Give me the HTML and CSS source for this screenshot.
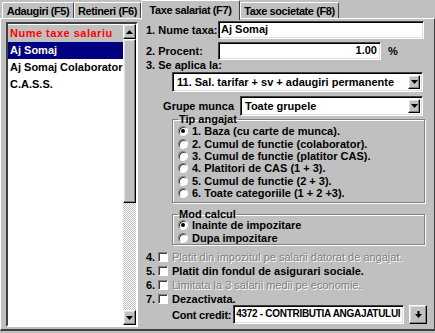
FILE: index.html
```html
<!DOCTYPE html>
<html lang="ro">
<head>
    <meta charset="UTF-8">
    <title>Taxe salariat</title>
    <link rel="stylesheet" href="styles.css">
</head>
<body>
    <div class="window">
        <div class="tabs">
            <div class="tab tab-1">Adaugiri (F5)</div>
            <div class="tab tab-2">Retineri (F6)</div>
            <div class="tab tab-3 active">Taxe salariat (F7)</div>
            <div class="tab tab-4">Taxe societate (F8)</div>
        </div>

        <div class="panel">
            <!-- list of taxes -->
            <div class="list">
                <div class="list-body">
                    <div class="list-head">Nume taxe salariu</div>
                    <div class="list-row selected">Aj Somaj</div>
                    <div class="list-row">Aj Somaj Colaborator</div>
                    <div class="list-row">C.A.S.S.</div>
                </div>
                <div class="scrollbar">
                    <div class="btn3d sb-btn">
                        <svg width="7" height="4" viewBox="0 0 7 4"><path d="M3.5 0 L7 4 L0 4 Z" fill="#000"/></svg>
                    </div>
                    <div class="btn3d sb-thumb"></div>
                    <div class="sb-track"></div>
                    <div class="btn3d sb-btn">
                        <svg width="7" height="4" viewBox="0 0 7 4"><path d="M0 0 L7 0 L3.5 4 Z" fill="#000"/></svg>
                    </div>
                </div>
            </div>

            <!-- edit form -->
            <div class="form">
                <div class="row row-name">
                    <span class="label">1. Nume taxa:</span>
                    <div class="field field-name">Aj Somaj</div>
                </div>
                <div class="row row-pct">
                    <span class="label">2. Procent:</span>
                    <div class="field field-pct">1.00</div>
                    <span class="pct">%</span>
                </div>
                <div class="label label-apply">3. Se aplica la:</div>
                <div class="combo combo-apply">
                    <div class="combo-text">11. Sal. tarifar + sv + adaugiri permanente</div>
                    <div class="btn3d combo-btn">
                        <svg width="7" height="4" viewBox="0 0 7 4"><path d="M0 0 L7 0 L3.5 4 Z" fill="#000"/></svg>
                    </div>
                </div>
                <div class="row row-group">
                    <span class="label label-group">Grupe munca</span>
                    <div class="combo combo-group">
                        <div class="combo-text">Toate grupele</div>
                        <div class="btn3d combo-btn">
                            <svg width="7" height="4" viewBox="0 0 7 4"><path d="M0 0 L7 0 L3.5 4 Z" fill="#000"/></svg>
                        </div>
                    </div>
                </div>

                <fieldset class="groupbox box-tip">
                    <legend>Tip angajat</legend>
                    <div class="opt"><span class="radio checked"></span>1. Baza (cu carte de munca).</div>
                    <div class="opt"><span class="radio"></span>2. Cumul de functie (colaborator).</div>
                    <div class="opt"><span class="radio"></span>3. Cumul de functie (platitor CAS).</div>
                    <div class="opt"><span class="radio"></span>4. Platitori de CAS (1 + 3).</div>
                    <div class="opt"><span class="radio"></span>5. Cumul de functie (2 + 3).</div>
                    <div class="opt"><span class="radio"></span>6. Toate categoriile (1 + 2 +3).</div>
                </fieldset>

                <fieldset class="groupbox box-mod">
                    <legend>Mod calcul</legend>
                    <div class="opt"><span class="radio checked"></span>Inainte de impozitare</div>
                    <div class="opt"><span class="radio"></span>Dupa impozitare</div>
                </fieldset>

                <div class="checks">
                    <div class="check-row"><span class="num">4.</span><span class="check"></span><span class="disabled">Platit din impozitul pe salarii datorat de angajat.</span></div>
                    <div class="check-row"><span class="num">5.</span><span class="check"></span>Platit din fondul de asigurari sociale.</div>
                    <div class="check-row"><span class="num">6.</span><span class="check"></span><span class="disabled">Limitata la 3 salarii medii pe economie.</span></div>
                    <div class="check-row"><span class="num">7.</span><span class="check"></span>Dezactivata.</div>
                </div>

                <div class="row row-cont">
                    <span class="label label-cont">Cont credit:</span>
                    <div class="field field-cont">4372 - CONTRIBUTIA ANGAJATULUI</div>
                    <div class="btn3d cont-btn">
                        <svg width="7" height="7" viewBox="0 0 7 7"><rect x="2.5" y="0" width="2" height="3" fill="#000"/><path d="M0 3 L7 3 L3.5 7 Z" fill="#000"/></svg>
                    </div>
                </div>
            </div>
        </div>
    </div>
</body>
</html>
```

FILE: styles.css
```css
* {
    box-sizing: border-box;
}

body {
    margin: 0;
    background: #c0c0c0;
    font-family: "Liberation Sans", Arial, sans-serif;
    font-size: 11px;
    font-weight: bold;
    color: #000;
}

.window {
    width: 435px;
    height: 333px;
    background: #c0c0c0;
}

/* tabs */
.tabs {
    display: flex;
    height: 18px;
    padding-left: 2px;
    align-items: flex-end;
}

.tab {
    height: 16px;
    padding-top: 2px;
    line-height: 12px;
    text-align: center;
    letter-spacing: -0.4px;
    border-top: 1px solid #fff;
    border-left: 1px solid #fff;
    border-right: 1px solid #404040;
    border-radius: 2px 2px 0 0;
    white-space: nowrap;
}

.tab-1 { width: 72px; }
.tab-2 { width: 67px; }
.tab-3 { width: 99px; }
.tab-4 { width: 99px; }

.tab.active {
    height: 20px;
    margin-bottom: -2px;
    padding-top: 3px;
    background: #c0c0c0;
    position: relative;
    z-index: 1;
}

/* panel */
.panel {
    display: flex;
    height: 313px;
    padding: 3px 0 0 5px;
    border-top: 1px solid #fff;
    border-left: 1px solid #fff;
    border-right: 1px solid #404040;
    border-bottom: 2px solid #404040;
}

/* list */
.list {
    display: flex;
    width: 132px;
    height: 305px;
    border: 2px solid;
    border-color: #404040 #fff #fff #404040;
    box-shadow: inset 1px 1px #000;
}

.list-body {
    flex: 1;
    background: #fff;
    padding-top: 1px;
}

.list-head {
    height: 17px;
    padding-left: 2px;
    line-height: 16px;
    background: #c0c0c0;
    color: #f00;
    letter-spacing: 0.5px;
}

.list-row {
    height: 17px;
    padding-left: 2px;
    line-height: 16px;
    white-space: nowrap;
}

.list-row.selected {
    background: #000080;
    color: #fff;
}

.btn3d {
    background: #c0c0c0;
    border: 1px solid;
    border-color: #fff #000 #000 #fff;
    box-shadow: inset -1px -1px #808080, inset 1px 1px #dfdfdf;
    display: flex;
    align-items: center;
    justify-content: center;
}

.scrollbar {
    width: 13px;
    display: flex;
    flex-direction: column;
    background: #dfdfdf;
}

.sb-btn {
    height: 15px;
}

.sb-thumb {
    height: 164px;
}

.sb-track {
    flex: 1;
    background: repeating-conic-gradient(#fff 0 25%, #c0c0c0 0 50%) 0 0 / 2px 2px;
}

/* form */
.form {
    width: 285px;
    margin-left: 4px;
    margin-top: -1px;
    display: flex;
    flex-direction: column;
}

.row {
    display: flex;
    align-items: center;
}

.label {
    white-space: nowrap;
}

.field {
    background: #fff;
    border: 1px solid;
    border-color: #404040 #fff #fff #404040;
    box-shadow: inset 1px 1px #000, inset -1px -1px #dfdfdf;
    padding: 0 3px;
    line-height: 15px;
    white-space: nowrap;
    overflow: hidden;
}

.row-name {
    height: 18px;
    padding-left: 4px;
}

.row-name .label {
    width: 72px;
}

.field-name {
    width: 206px;
    height: 18px;
    padding-left: 2px;
}

.row-pct {
    height: 18px;
    margin-top: 3px;
    padding-left: 4px;
}

.row-pct .label {
    width: 72px;
}

.field-pct {
    width: 163px;
    height: 18px;
    text-align: right;
}

.pct {
    margin-left: 7px;
}

.label-apply {
    padding-left: 4px;
    height: 11px;
    line-height: 11px;
}

.combo {
    display: flex;
    height: 20px;
    background: #fff;
    border: 1px solid;
    border-color: #404040 #fff #fff #404040;
    box-shadow: inset 1px 1px #000, inset -1px -1px #dfdfdf;
    padding: 2px;
}

.combo-text {
    flex: 1;
    padding-left: 2px;
    line-height: 15px;
    white-space: nowrap;
    overflow: hidden;
}

.combo-btn {
    width: 12px;
}

.combo-apply {
    width: 251px;
    margin-left: 30px;
    margin-top: 1px;
}

.row-group {
    margin-top: 4px;
    height: 20px;
}

.label-group {
    width: 98px;
    text-align: right;
    padding-right: 6px;
}

.combo-group {
    width: 183px;
}

/* group boxes */
.groupbox {
    margin: 0 0 0 30px;
    width: 253px;
    padding: 0 0 0 5px;
    border: 1px solid #808080;
    box-shadow: 1px 1px #fff, inset 1px 1px #fff;
}

.groupbox legend {
    padding: 0 1px;
    line-height: 11px;
}

.box-tip {
    margin-top: -2px;
    height: 89px;
}

.box-mod {
    margin-top: 6px;
    height: 36px;
}

.box-mod legend {
    line-height: 10px;
}

.opt {
    display: flex;
    align-items: center;
    height: 12.4px;
    line-height: 12px;
    white-space: nowrap;
}

.radio {
    width: 10px;
    height: 10px;
    margin-right: 4px;
    border-radius: 50%;
    background: #fff;
    border: 1px solid;
    border-color: #808080 #fff #fff #808080;
    box-shadow: inset 1px 1px #404040;
    position: relative;
    flex-shrink: 0;
}

.radio.checked::after {
    content: "";
    position: absolute;
    left: 2px;
    top: 2px;
    width: 4px;
    height: 4px;
    border-radius: 50%;
    background: #000;
}

/* checkboxes */
.checks {
    margin-top: 5px;
    padding-left: 4px;
}

.check-row {
    display: flex;
    align-items: center;
    height: 14px;
    white-space: nowrap;
}

.num {
    width: 12px;
}

.check {
    width: 10px;
    height: 10px;
    margin-right: 4px;
    background: #fff;
    border: 1px solid;
    border-color: #808080 #fff #fff #808080;
    box-shadow: inset 1px 1px #404040;
    flex-shrink: 0;
}

.disabled {
    color: #808080;
    text-shadow: 1px 1px #fff;
    font-weight: normal;
}

.row-cont {
    margin-top: -1px;
    height: 19px;
    padding-left: 30px;
}

.label-cont {
    margin-right: 2px;
    letter-spacing: -0.2px;
}

.field-cont {
    width: 176px;
    height: 19px;
    padding-left: 2px;
    font-size: 10px;
    letter-spacing: -0.3px;
}

.cont-btn {
    width: 18px;
    height: 19px;
    margin-left: 5px;
}
```
